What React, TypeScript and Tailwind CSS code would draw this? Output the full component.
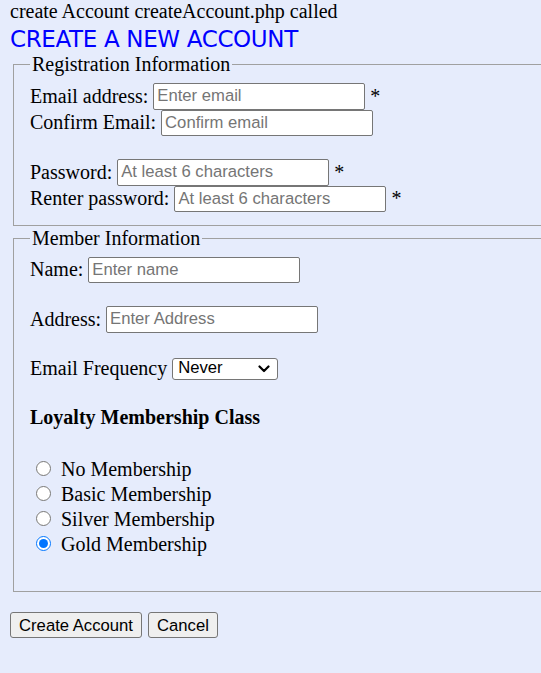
import { useState } from 'react';

const serif = "font-['Liberation_Serif','Times_New_Roman',serif]";
const sans = "font-['Liberation_Sans',Arial,sans-serif]";

const TextBox = ({ placeholder, type = 'text' }: { placeholder: string; type?: string }) => (
  <input
    type={type}
    placeholder={placeholder}
    className={`${sans} h-[26.5px] w-[212px] rounded-[2px] border border-[#767676] bg-white px-[3px] text-[16.67px] text-black outline-none placeholder:text-[#757575]`}
  />
);

const Row = ({ label, children, className = '' }: { label: string; children: React.ReactNode; className?: string }) => (
  <div className={`flex h-[26.5px] items-center gap-[5px] leading-[23px] ${className}`}>
    <span>{label}</span>
    {children}
  </div>
);

const plans = ['No Membership', 'Basic Membership', 'Silver Membership', 'Gold Membership'];

const App = () => {
  const [plan, setPlan] = useState('Gold Membership');
  return (
    <div className={`${serif} min-h-screen w-full overflow-hidden bg-[#e6ecfc] text-[20px] text-black`}>
      <div className="pl-[10px] leading-[23px]">create Account createAccount.php called</div>
      <h1 className="mt-[3px] pl-[10px] font-['DejaVu_Sans',Verdana,sans-serif] text-[23px] leading-[27px] tracking-[-0.35px] text-[#0000ff]">
        CREATE A NEW ACCOUNT
      </h1>

      <fieldset className="ml-[13px] w-[620px] border border-[#a0a0a0] pt-[7px] pb-[12.5px] pl-[16px]">
        <legend className="px-[2px] leading-[23px]">Registration Information</legend>
        <Row label="Email address:">
          <TextBox placeholder="Enter email" />
          <span>*</span>
        </Row>
        <Row label="Confirm Email:">
          <TextBox placeholder="Confirm email" />
        </Row>
        <Row label="Password:" className="mt-[23px]">
          <TextBox type="password" placeholder="At least 6 characters" />
          <span>*</span>
        </Row>
        <Row label="Renter password:">
          <TextBox type="password" placeholder="At least 6 characters" />
          <span>*</span>
        </Row>
      </fieldset>

      <fieldset className="mt-[1px] ml-[13px] w-[620px] border border-[#a0a0a0] pt-[7px] pb-[33.5px] pl-[16px]">
        <legend className="px-[2px] leading-[23px]">Member Information</legend>
        <Row label="Name:">
          <TextBox placeholder="Enter name" />
        </Row>
        <Row label="Address:" className="mt-[23px]">
          <TextBox placeholder="Enter Address" />
        </Row>
        <Row label="Email Frequency" className="mt-[23px]">
          <div className={`${sans} flex h-[22px] w-[106px] items-center justify-between rounded-[3px] border border-[#767676] bg-white pr-[7px] pl-[5px] text-[16.67px] leading-none`}>
            <span>Never</span>
            <svg width="12" height="8" viewBox="0 0 12 8" fill="none" stroke="#000" strokeWidth="2.2" strokeLinecap="round" strokeLinejoin="round">
              <polyline points="1.5,1.5 6,6 10.5,1.5" />
            </svg>
          </div>
        </Row>
        <div className="mt-[23.5px] font-bold leading-[23px]">Loyalty Membership Class</div>
        <div className="mt-[28.5px] flex flex-col">
          {plans.map(p => (
            <label key={p} className="flex h-[25px] items-start leading-[25px]">
              <input
                type="radio"
                name="membership"
                checked={plan === p}
                onChange={() => setPlan(p)}
                className="mt-[4px] mr-[10px] ml-[6px] h-[15px] w-[15px]"
              />
              <span>{p}</span>
            </label>
          ))}
        </div>
      </fieldset>

      <div className={`${sans} mt-[20.5px] ml-[10px] flex gap-[6px] text-[16.67px]`}>
        <button className="h-[26px] w-[132px] rounded-[3px] border border-[#767676] bg-[#efefef] text-black">Create Account</button>
        <button className="h-[26px] w-[70px] rounded-[3px] border border-[#767676] bg-[#efefef] text-black">Cancel</button>
      </div>
    </div>
  );
};

export default App;
